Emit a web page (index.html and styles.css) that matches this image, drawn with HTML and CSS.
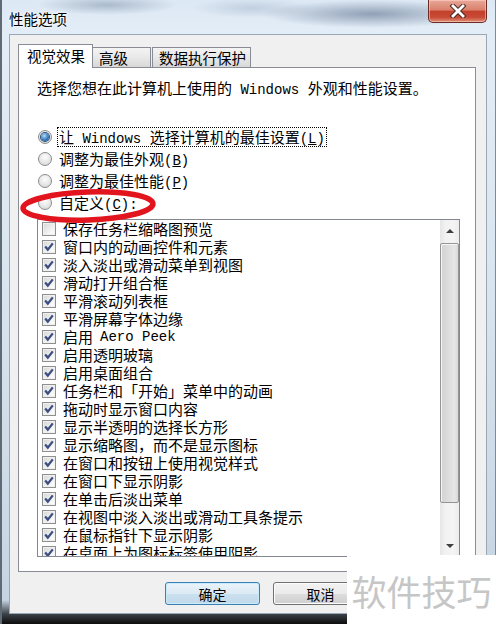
FILE: index.html
```html
<!DOCTYPE html>
<html lang="zh-CN">
  <head>
    <meta charset="UTF-8" />
    <meta name="viewport" content="width=device-width, initial-scale=1.0" />
    <title>性能选项</title>
    <link rel="stylesheet" href="styles.css">
  </head>

  <body>
    <div class="window">
      <div class="titlebar">
        <span class="title">性能选项</span>
        <div class="close">
          <svg width="20" height="14" viewBox="0 0 20 14">
            <path d="M5 2 L15 12 M15 2 L5 12" stroke="#4a2a24" stroke-width="4.8" stroke-linecap="square" />
            <path d="M5 2 L15 12 M15 2 L5 12" stroke="#ffffff" stroke-width="2.8" stroke-linecap="square" />
          </svg>
        </div>
      </div>

      <div class="client">
        <div class="tabs">
          <div class="tab active">视觉效果</div>
          <div class="tab tab-adv">高级</div>
          <div class="tab tab-dep">数据执行保护</div>
        </div>

        <div class="panel">
          <p class="intro">选择您想在此计算机上使用的<span class="latin"> Windows </span>外观和性能设置。</p>

          <div class="radios">
            <div class="radio-row">
              <span class="radio on"></span>
              <span class="label focus">让<span class="latin"> Windows </span>选择计算机的最佳设置<span class="latin">(<u>L</u>)</span></span>
            </div>
            <div class="radio-row">
              <span class="radio"></span>
              <span class="label">调整为最佳外观<span class="latin">(<u>B</u>)</span></span>
            </div>
            <div class="radio-row">
              <span class="radio"></span>
              <span class="label">调整为最佳性能<span class="latin">(<u>P</u>)</span></span>
            </div>
            <div class="radio-row">
              <span class="radio"></span>
              <span class="label">自定义<span class="latin">(<u>C</u>):</span></span>
            </div>
          </div>

          <div class="listbox">
            <div class="items">
              <div class="item"><span class="check"></span>保存任务栏缩略图预览</div>
              <div class="item"><span class="check on"></span>窗口内的动画控件和元素</div>
              <div class="item"><span class="check on"></span>淡入淡出或滑动菜单到视图</div>
              <div class="item"><span class="check on"></span>滑动打开组合框</div>
              <div class="item"><span class="check on"></span>平滑滚动列表框</div>
              <div class="item"><span class="check on"></span>平滑屏幕字体边缘</div>
              <div class="item"><span class="check on"></span>启用<span class="latin"> Aero Peek</span></div>
              <div class="item"><span class="check on"></span>启用透明玻璃</div>
              <div class="item"><span class="check on"></span>启用桌面组合</div>
              <div class="item"><span class="check on"></span>任务栏和「开始」菜单中的动画</div>
              <div class="item"><span class="check on"></span>拖动时显示窗口内容</div>
              <div class="item"><span class="check on"></span>显示半透明的选择长方形</div>
              <div class="item"><span class="check on"></span>显示缩略图，而不是显示图标</div>
              <div class="item"><span class="check on"></span>在窗口和按钮上使用视觉样式</div>
              <div class="item"><span class="check on"></span>在窗口下显示阴影</div>
              <div class="item"><span class="check on"></span>在单击后淡出菜单</div>
              <div class="item"><span class="check on"></span>在视图中淡入淡出或滑动工具条提示</div>
              <div class="item"><span class="check on"></span>在鼠标指针下显示阴影</div>
              <div class="item"><span class="check on"></span>在桌面上为图标标签使用阴影</div>
            </div>
            <div class="scrollbar">
              <div class="sb-btn"><span class="arrow up"></span></div>
              <div class="sb-track"><div class="thumb"></div></div>
              <div class="sb-btn"><span class="arrow down"></span></div>
            </div>
          </div>
        </div>

        <div class="buttons">
          <button class="btn default">确定</button>
          <button class="btn">取消</button>
        </div>
      </div>
    </div>

    <!-- red marker drawn over the screenshot -->
    <svg class="marker" width="496" height="624" viewBox="0 0 496 624">
      <ellipse cx="88" cy="206" rx="65" ry="14" transform="rotate(-2 88 206)" fill="none" stroke="#e2141d" stroke-width="5.5" />
    </svg>

    <div class="watermark">软件技巧</div>
  </body>
</html>
```

FILE: styles.css
```css
* {
  box-sizing: border-box;
}

html,
body {
  margin: 0;
  padding: 0;
}

body {
  width: 496px;
  height: 624px;
  overflow: hidden;
  position: relative;
  background: #111;
  font-family: "Noto Sans CJK SC", sans-serif;
}

/* glass frame */
.window {
  height: 624px;
  display: flex;
  flex-direction: column;
  padding: 0 8px 10px;
  border-left: 2px solid #5f6a75;
  border-right: 1px solid #7d8a97;
  background:
    radial-gradient(ellipse 70px 10px at 105px 5px, rgba(110, 130, 155, 0.45), transparent),
    radial-gradient(ellipse 110px 14px at 370px 14px, rgba(80, 100, 130, 0.55), transparent),
    radial-gradient(ellipse 60px 10px at 250px 8px, rgba(140, 160, 185, 0.35), transparent),
    linear-gradient(to bottom, #dce8f4 0px, #e3edf7 34px, #d8e4ef 300px, #c6d4e2 600px, #3b4148 614px, #0c0c0c 624px);
}

.titlebar {
  height: 34px;
  margin-left: -1px;
  display: flex;
  align-items: flex-start;
}

.title {
  margin-top: 10px;
  font-size: 14.5px;
  line-height: 18px;
  color: #000;
  text-shadow: 0 0 6px #fff, 0 0 3px #fff;
}

.close {
  margin-left: auto;
  width: 59px;
  height: 23px;
  border: 1px solid #6b2a22;
  border-top: none;
  border-radius: 0 0 5px 5px;
  background: linear-gradient(to bottom, #e9a899 0%, #d9806c 45%, #c4412c 52%, #c84a35 78%, #e0917a 100%);
  box-shadow: inset 0 0 0 1px rgba(255, 220, 210, 0.5);
  display: flex;
  align-items: center;
  justify-content: center;
}

.client {
  flex: 1;
  display: flex;
  flex-direction: column;
  margin-left: -1px;
  padding: 9px 10px 8px 8px;
  background: #f0f0f0;
  border: 1px solid #9aa8b6;
}

/* tabs */
.tabs {
  height: 24px;
  display: flex;
  align-items: flex-end;
}

.tab {
  height: 20px;
  margin-bottom: 1px;
  padding-left: 6px;
  font-size: 14.5px;
  line-height: 19px;
  color: #000;
  border: 1px solid #898c95;
  border-bottom: none;
  background: linear-gradient(to bottom, #f4f4f4, #e8e8e8 50%, #d8d8d8);
}

.tab.active {
  position: relative;
  z-index: 1;
  width: 75px;
  height: 24px;
  margin-bottom: 0;
  padding-left: 8px;
  line-height: 22px;
  background: #fff;
}

.tab-adv {
  width: 58px;
  border-left: none;
}

.tab-dep {
  width: 99px;
  margin-left: 1px;
}

.panel {
  flex: 1;
  margin-top: -1px;
  padding: 11px 15px 0 18px;
  background: #fff;
  border: 1px solid #898c95;
  font-family: "Noto Sans CJK SC", sans-serif;
  font-size: 15px;
  color: #000;
}

/* half-width runs, like the old bitmap font */
.latin {
  font-family: "Liberation Mono", monospace;
  font-size: 14px;
  line-height: 12px;
}

.intro {
  margin: 0;
  height: 18px;
  line-height: 18px;
}

.radios {
  margin-top: 29px;
  padding-left: 1px;
}

.radio-row {
  height: 22px;
  display: flex;
  align-items: center;
  gap: 6px;
}

.radio {
  width: 14px;
  height: 14px;
  border-radius: 50%;
  border: 1px solid #8a8c8e;
  background: radial-gradient(circle at 50% 35%, #fdfdfd, #e4e4e4 60%, #cfcfcf);
  display: flex;
  align-items: center;
  justify-content: center;
}

.radio.on::after {
  content: "";
  width: 8px;
  height: 8px;
  border-radius: 50%;
  background: radial-gradient(circle at 40% 35%, #b6dcf7, #3a7dbf 55%, #1c4f86);
  box-shadow: 0 0 0 1px #2a4f78;
}

.label {
  height: 18px;
  line-height: 18px;
  padding: 0 1px;
}

.label.focus {
  outline: 1px dotted #000;
}

/* listbox with checkboxes */
.listbox {
  margin-top: 5px;
  height: 338px;
  display: flex;
  border: 1px solid #828790;
}

.items {
  flex: 1;
  overflow: hidden;
  padding-left: 4px;
}

.item {
  height: 18px;
  display: flex;
  align-items: center;
  gap: 7px;
  white-space: nowrap;
  line-height: 18px;
}

.check {
  flex: none;
  width: 14px;
  height: 14px;
  border: 1px solid #8e8f8f;
  background: linear-gradient(135deg, #d6d6d6, #f6f6f6 70%, #fff);
  box-shadow: inset 0 0 0 1px #f0f0f0;
}

.check.on {
  background-image:
    url("data:image/svg+xml;utf8,<svg xmlns='http://www.w3.org/2000/svg' width='12' height='12' viewBox='0 0 12 12'><path d='M2.2 5.6 L4.8 8.6 L9.8 2.4' fill='none' stroke='%233a4f82' stroke-width='2.3'/></svg>"),
    linear-gradient(135deg, #d6d6d6, #f6f6f6 70%, #fff);
  background-repeat: no-repeat;
  background-position: center;
}

.scrollbar {
  width: 19px;
  display: flex;
  flex-direction: column;
  background: linear-gradient(to right, #e6e6e6, #f2f2f2 30%, #f4f4f4 70%, #ececec);
}

.sb-btn {
  height: 21px;
  display: flex;
  align-items: center;
  justify-content: center;
}

.arrow {
  width: 0;
  height: 0;
  border-left: 4px solid transparent;
  border-right: 4px solid transparent;
}

.arrow.up {
  border-bottom: 4px solid #3f3f3f;
}

.arrow.down {
  border-top: 4px solid #3f3f3f;
}

.sb-track {
  flex: 1;
}

.thumb {
  margin-top: 2px;
  height: 260px;
  border: 1px solid #959595;
  border-radius: 2px;
  background: linear-gradient(to right, #d2d2d2, #dcdcdc 40%, #e6e6e6 80%, #d8d8d8);
  box-shadow: inset 1px 1px 0 #f6f6f6;
}

/* dialog buttons, the third one sits under the watermark */
.buttons {
  margin-top: 10px;
  padding-right: 108px;
  display: flex;
  justify-content: flex-end;
  gap: 13px;
}

.btn {
  width: 95px;
  height: 23px;
  padding: 0;
  font-family: "Noto Sans CJK SC", sans-serif;
  font-size: 14px;
  line-height: 20px;
  color: #000;
  border: 1px solid #707070;
  border-radius: 3px;
  background: linear-gradient(to bottom, #f2f2f2, #ebebeb 50%, #dddddd 51%, #cfcfcf);
  box-shadow: inset 0 0 0 1px #fcfcfc;
}

.btn.default {
  border-color: #3c7fb1;
  background: linear-gradient(to bottom, #eaf3f9, #dceaf4 50%, #cbe0ee 51%, #c2d9ea);
  box-shadow: inset 0 0 0 1px #c8eafd;
}

/* overlays on top of the screenshot */
.marker {
  position: absolute;
  left: 0;
  top: 0;
  pointer-events: none;
}

.watermark {
  position: absolute;
  left: 347px;
  top: 555px;
  width: 149px;
  height: 69px;
  background: #fff;
  color: #c6c6c6;
  font-size: 35px;
  display: flex;
  align-items: center;
  justify-content: center;
  padding-top: 2px;
}
```
